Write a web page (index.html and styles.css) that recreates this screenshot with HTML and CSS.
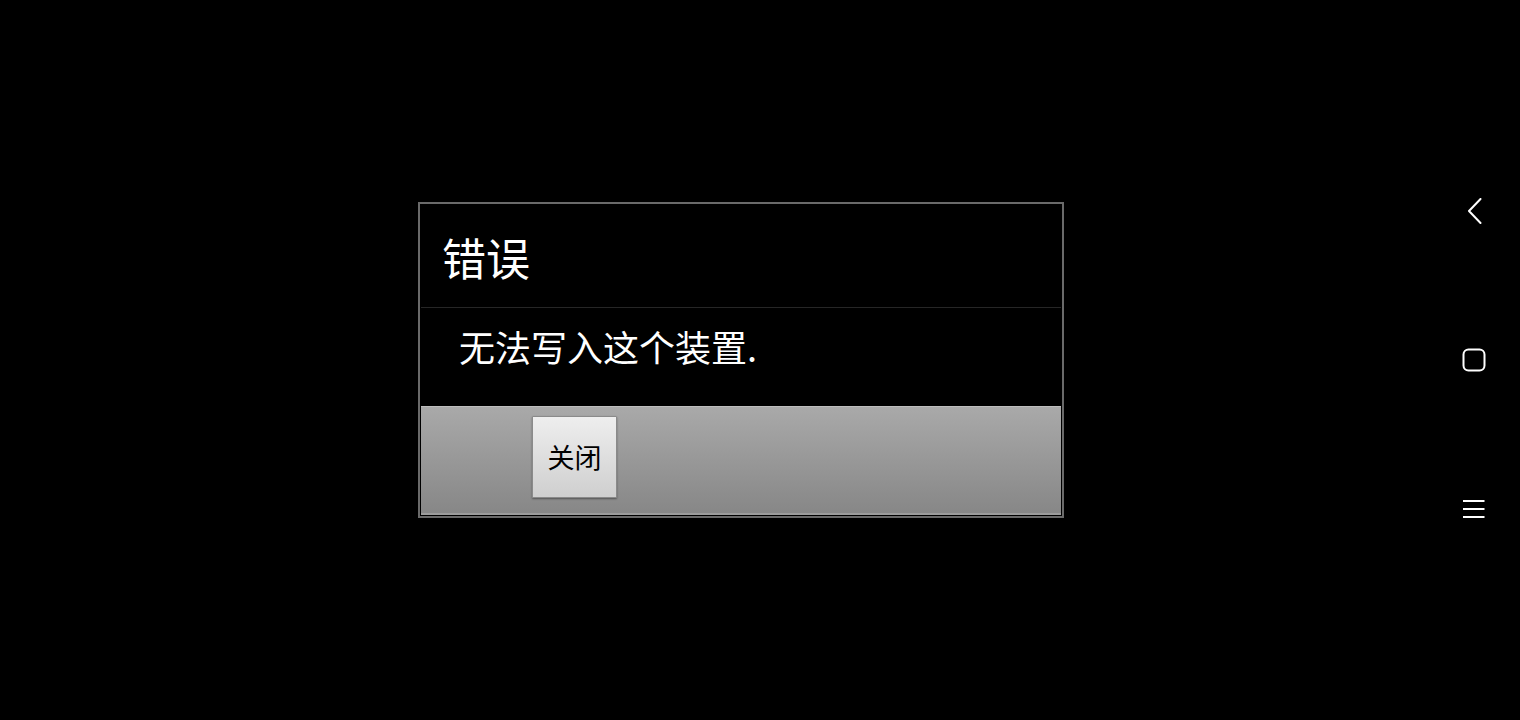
FILE: index.html
```html
<!DOCTYPE html>
<html lang="zh-CN">

<head>
    <meta charset="UTF-8">
    <meta name="viewport" content="width=device-width, initial-scale=1.0">
    <title>错误</title>
    <link rel="stylesheet" href="styles.css">
</head>

<body>

    <div class="screen">
        <div class="dialog">
            <div class="dialog-inner">
                <div class="dialog-title">错误</div>
                <div class="dialog-message">无法写入这个装置.</div>
                <div class="dialog-buttons">
                    <button class="dialog-button">关闭</button>
                </div>
            </div>
        </div>
    </div>

    <div class="nav-bar">
        <svg class="nav-icon" viewBox="0 0 26 26" width="26" height="26">
            <path d="M19.5 1 L8 13 L19.5 25" fill="none" stroke="#fff" stroke-width="2" stroke-linecap="round" stroke-linejoin="round" />
        </svg>
        <svg class="nav-icon" viewBox="0 0 26 26" width="26" height="26">
            <rect x="2.5" y="2.5" width="21" height="21" rx="5" fill="none" stroke="#fff" stroke-width="2" />
        </svg>
        <svg class="nav-icon" viewBox="0 0 26 26" width="26" height="26">
            <path d="M2 5 H23.5 M2 13 H23.5 M2 21 H23.5" fill="none" stroke="#fff" stroke-width="2" />
        </svg>
    </div>

</body>

</html>
```

FILE: styles.css
```css
body {
    margin: 0;
    width: 1520px;
    height: 720px;
    background: #000;
    color: #fff;
    font-family: "Noto Sans CJK SC", "Noto Sans", sans-serif;
    display: flex;
    overflow: hidden;
}

.screen {
    flex: 1;
}

.dialog {
    margin: 202px 0 0 418px;
    width: 642px;
    border: 2px solid #6a6a6a;
    background: #000;
}

.dialog-inner {
    border: 1px solid #000;
}

.dialog-title {
    height: 102px;
    padding-left: 21px;
    font-size: 44px;
    line-height: 104px;
    border-bottom: 1px solid #262626;
}

.dialog-message {
    height: 98px;
    padding-left: 38px;
    font-size: 36px;
    line-height: 76px;
}

.dialog-buttons {
    height: 109px;
    padding: 9px 0 0 111px;
    box-sizing: border-box;
    background: linear-gradient(to bottom, #a9a9a9, #878787);
    border-top: 1px solid #bdbdbd;
    border-bottom: 2px solid #9c9c9c;
}

.dialog-button {
    display: block;
    width: 85px;
    height: 82px;
    padding: 0 0 2px;
    border: 1px solid #8a8a8a;
    border-radius: 1px;
    background: linear-gradient(to bottom, #eeeeee, #cfcfcf);
    box-shadow: 0 1px 2px rgba(0, 0, 0, 0.4);
    color: #000;
    font-family: "Noto Sans CJK SC", "Noto Sans", sans-serif;
    font-size: 27px;
}

.nav-bar {
    width: 93px;
    display: flex;
    flex-direction: column;
    align-items: center;
    justify-content: center;
    gap: 123px;
}

.nav-icon {
    display: block;
}
```
